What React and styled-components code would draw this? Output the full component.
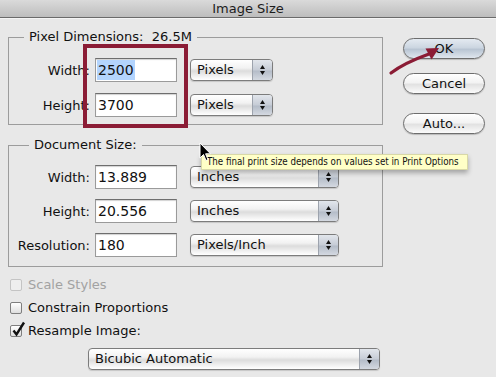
import React from 'react';
import styled, { createGlobalStyle } from 'styled-components';

const GlobalStyle = createGlobalStyle`
  html, body {
    margin: 0;
    padding: 0;
    background: #e8e8e8;
  }
  body {
    font-family: "DejaVu Sans", "Liberation Sans", sans-serif;
    color: #111;
  }
`;

const Dialog = styled.div`
  position: relative;
  width: 496px;
  height: 377px;
  overflow: hidden;
  background: #e8e8e8;
  font-size: 13px;
`;

const TitleBar = styled.div`
  height: 17px;
  line-height: 17px;
  text-align: center;
  font-size: 13px;
  color: #1c1c1c;
  background: linear-gradient(#dadada, #bdbdbd);
  border-bottom: 1px solid #6a6a6a;
  box-shadow: 0 1px 0 #f4f4f4;
`;

const Body = styled.div`
  display: flex;
  gap: 20px;
  padding: 11px 0 0 8px;
`;

const LeftColumn = styled.div`
  width: 375px;
  display: flex;
  flex-direction: column;
`;

const RightColumn = styled.div`
  display: flex;
  flex-direction: column;
  padding-top: 9px;
`;

const Group = styled.fieldset`
  margin: ${p => p.$top}px 0 0 0;
  padding: ${p => p.$padTop}px 0 ${p => p.$padBottom}px 0;
  border: 1px solid #9c9c9c;
  min-inline-size: 0;
`;

const Legend = styled.legend`
  margin-left: ${p => p.$indent}px;
  padding: 0 5px;
  line-height: 16px;
  font-size: 13px;
  white-space: pre;
`;

const Rows = styled.div`
  display: grid;
  grid-template-columns: 86px 95px ${p => p.$selectWidth}px;
  row-gap: ${p => p.$gap}px;
  align-items: center;
`;

const Label = styled.label`
  text-align: right;
  padding-right: 5px;
  font-size: 13px;
`;

const Field = styled.div`
  height: 24px;
  box-sizing: border-box;
  background: #fff;
  border: 1px solid #9a9a9a;
  border-top-color: #6e6e6e;
  box-shadow: inset 0 1px 1px rgba(0, 0, 0, 0.18);
  padding: 0 0 0 1px;
  display: flex;
  align-items: center;
  font-size: 14px;
  margin-right: 13px;
`;

const Selected = styled.span`
  background: ${p => (p.$on ? '#b3d4fd' : 'transparent')};
  padding: 2px 1px;
`;

const SelectBox = styled.div`
  height: 22px;
  box-sizing: border-box;
  width: ${p => (p.$width ? `${p.$width}px` : 'auto')};
  display: flex;
  border: 1px solid #7c7c7c;
  border-radius: 4px;
  overflow: hidden;
  background: linear-gradient(#ffffff 0%, #f2f2f2 40%, #dcdcdc 55%, #f4f4f4 85%, #ffffff 100%);
  box-shadow: 0 1px 1px rgba(0, 0, 0, 0.15);
`;

const SelectText = styled.span`
  flex: 1;
  padding-left: 6px;
  line-height: 20px;
  font-size: 13px;
`;

const Stepper = styled.span`
  width: 19px;
  border-left: 1px solid #9da3ad;
  background: linear-gradient(#e2e6ec 0%, #c6ccd6 50%, #b4bcc8 55%, #d4d9e1 100%);
  display: flex;
  align-items: center;
  justify-content: center;
`;

const Checks = styled.div`
  display: flex;
  flex-direction: column;
  margin-top: 6px;
`;

const CheckRow = styled.div`
  height: 23px;
  display: flex;
  align-items: center;
  gap: 6px;
  padding-left: 2px;
  font-size: 13px;
  color: ${p => (p.$disabled ? '#a2a2a2' : '#111')};
`;

const Box = styled.span`
  width: 12px;
  height: 12px;
  box-sizing: border-box;
  border: 1px solid ${p => (p.$disabled ? '#c4c4c4' : '#7e7e7e')};
  border-radius: 2px;
  background: ${p => (p.$disabled ? '#eeeeee' : 'linear-gradient(#ffffff, #dedede)')};
  position: relative;
  svg {
    position: absolute;
    left: 0;
    top: -5px;
  }
`;

const MethodRow = styled.div`
  margin: 6px 0 0 80px;
`;

const Button = styled.div`
  width: 82px;
  height: 21px;
  box-sizing: border-box;
  margin-top: ${p => p.$top}px;
  border: 1px solid #6d6d6d;
  border-radius: 11px;
  text-align: center;
  line-height: 19px;
  font-size: 13px;
  background: ${p =>
    p.$default
      ? 'linear-gradient(#e4eaf1 0%, #ccd6e1 45%, #b9c5d3 55%, #dfe6ee 100%)'
      : 'linear-gradient(#ffffff 0%, #f3f3f3 45%, #e2e2e2 55%, #fbfbfb 100%)'};
  box-shadow: 0 1px 1px rgba(0, 0, 0, 0.2);
`;

const Highlight = styled.div`
  position: absolute;
  left: 83px;
  top: 44px;
  width: 105px;
  height: 84px;
  box-sizing: border-box;
  border: 4px solid #8b1c35;
  pointer-events: none;
`;

const Tooltip = styled.div`
  position: absolute;
  left: 201px;
  top: 154px;
  width: 267px;
  height: 16px;
  box-sizing: border-box;
  padding-left: 5px;
  background: #ffffc7;
  border: 1px solid #d8d8a8;
  box-shadow: 0 3px 5px rgba(0, 0, 0, 0.3);
  font-family: "DejaVu Sans Condensed", "Liberation Sans Narrow", "DejaVu Sans", sans-serif;
  font-size: 9.7px;
  line-height: 14px;
  color: #111;
  white-space: nowrap;
`;

const Overlay = styled.svg`
  position: absolute;
  left: 0;
  top: 0;
  pointer-events: none;
`;

const StepIcon = () => (
  <svg width="7" height="12" viewBox="0 0 7 12">
    <path d="M3.5 1 L6 5 L1 5 Z" fill="#111" />
    <path d="M3.5 11 L6 7 L1 7 Z" fill="#111" />
  </svg>
);

const Select = ({ value, width }) => (
  <SelectBox $width={width}>
    <SelectText>{value}</SelectText>
    <Stepper>
      <StepIcon />
    </Stepper>
  </SelectBox>
);

const Check = ({ label, checked, disabled }) => (
  <CheckRow $disabled={disabled}>
    <Box $disabled={disabled}>
      {checked && (
        <svg width="15" height="16" viewBox="0 0 15 16">
          <path d="M2.5 9.5 L5.5 13.5 L13 1.5" fill="none" stroke="#111" strokeWidth="2.4" />
        </svg>
      )}
    </Box>
    {label}
  </CheckRow>
);

const pixelRows = [
  { label: 'Width:', value: '2500', unit: 'Pixels', selected: true },
  { label: 'Height:', value: '3700', unit: 'Pixels' },
];

const docRows = [
  { label: 'Width:', value: '13.889', unit: 'Inches' },
  { label: 'Height:', value: '20.556', unit: 'Inches' },
  { label: 'Resolution:', value: '180', unit: 'Pixels/Inch' },
];

export default function App() {
  return (
    <Dialog>
      <GlobalStyle />
      <TitleBar>Image Size</TitleBar>
      <Body>
        <LeftColumn>
          <Group $top={0} $padTop={13} $padBottom={7}>
            <Legend $indent={15}>{'Pixel Dimensions:  26.5M'}</Legend>
            <Rows $selectWidth={83} $gap={11}>
              {pixelRows.map(r => (
                <React.Fragment key={r.label}>
                  <Label>{r.label}</Label>
                  <Field>
                    <Selected $on={r.selected}>{r.value}</Selected>
                  </Field>
                  <Select value={r.unit} />
                </React.Fragment>
              ))}
            </Rows>
          </Group>
          <Group $top={12} $padTop={12} $padBottom={9}>
            <Legend $indent={20}>Document Size:</Legend>
            <Rows $selectWidth={149} $gap={10}>
              {docRows.map(r => (
                <React.Fragment key={r.label}>
                  <Label>{r.label}</Label>
                  <Field>
                    <Selected>{r.value}</Selected>
                  </Field>
                  <Select value={r.unit} />
                </React.Fragment>
              ))}
            </Rows>
          </Group>
          <Checks>
            <Check label="Scale Styles" disabled />
            <Check label="Constrain Proportions" />
            <Check label="Resample Image:" checked />
          </Checks>
          <MethodRow>
            <Select value="Bicubic Automatic" width={292} />
          </MethodRow>
        </LeftColumn>
        <RightColumn>
          <Button $top={0} $default>OK</Button>
          <Button $top={14}>Cancel</Button>
          <Button $top={19}>Auto...</Button>
        </RightColumn>
      </Body>

      <Highlight />
      <Tooltip>The final print size depends on values set in Print Options</Tooltip>
      <Overlay width="496" height="377" viewBox="0 0 496 377">
        <path d="M391 73 Q 404 63 429 54" fill="none" stroke="#8b1c35" strokeWidth="3.2" strokeLinecap="round" />
        <path d="M439 48 L431.5 59.5 L425.5 48.5 Z" fill="#8b1c35" />
        <path
          d="M200 143 L200 158 L203.5 154.5 L206 160.5 L208 159.6 L205.6 153.8 L210.5 153.8 Z"
          fill="#000"
          stroke="#fff"
          strokeWidth="1"
          strokeLinejoin="round"
        />
      </Overlay>
    </Dialog>
  );
}
